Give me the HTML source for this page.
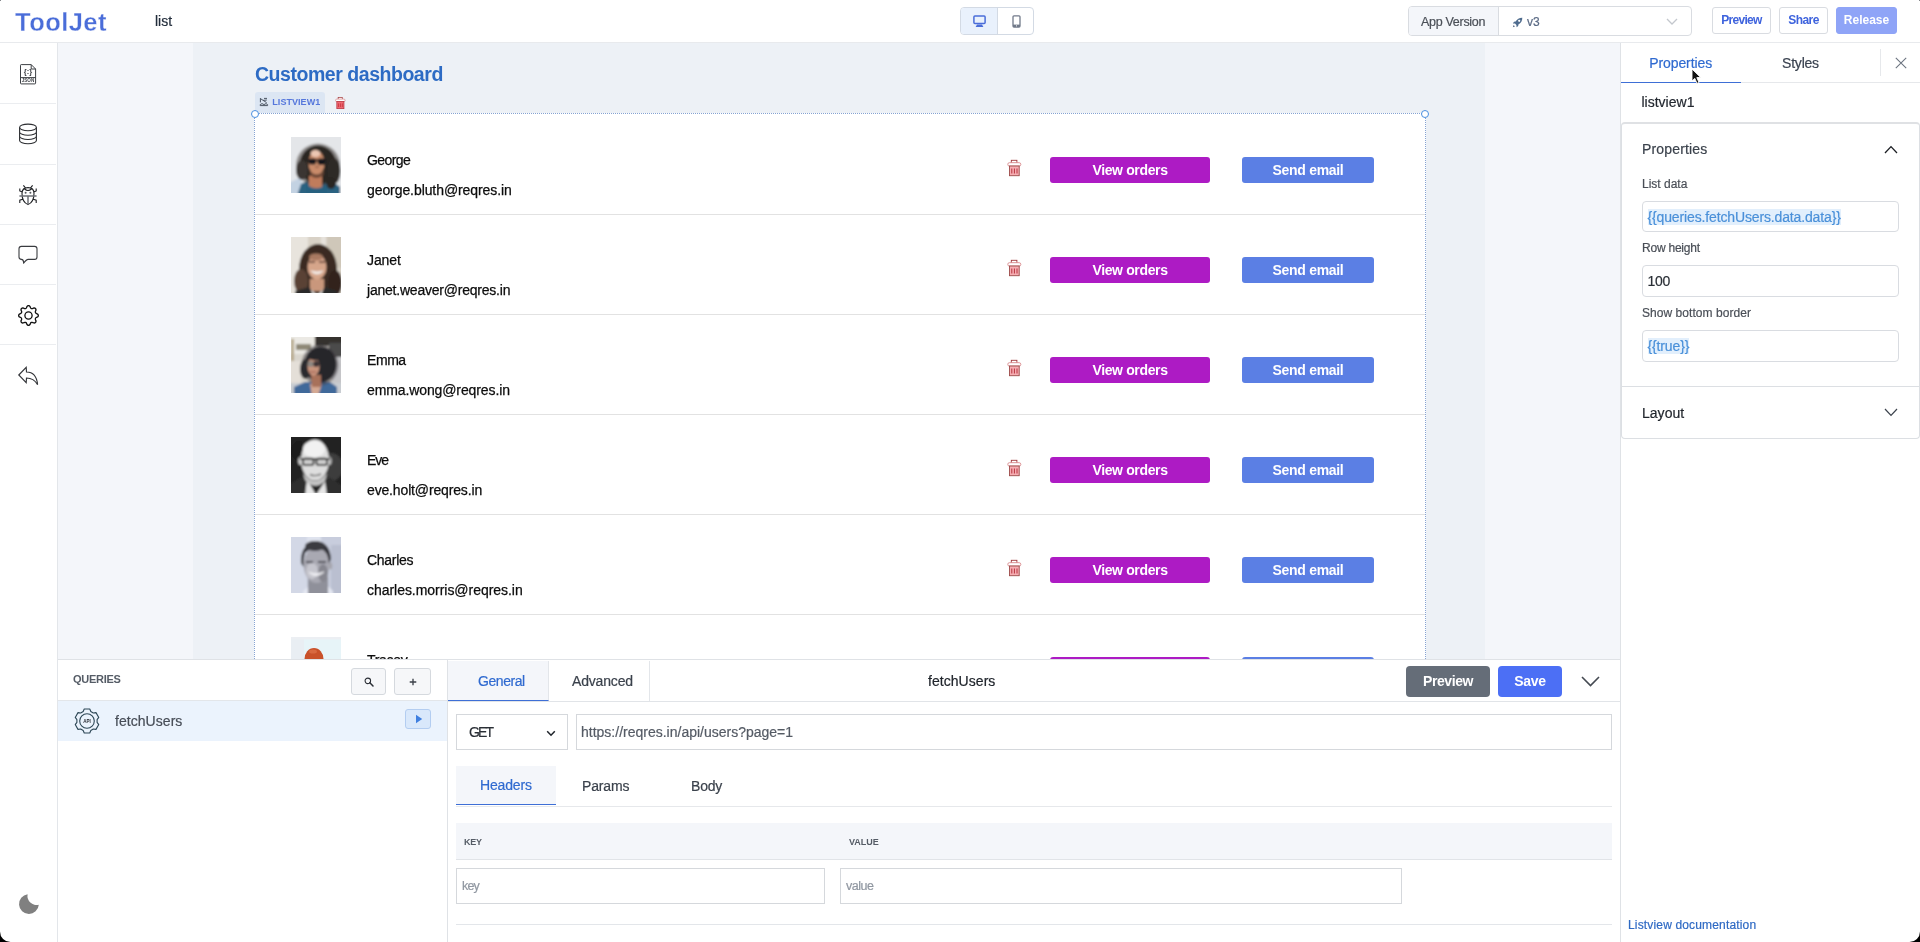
<!DOCTYPE html>
<html lang="en">
<head>
<meta charset="utf-8">
<title>ToolJet - list</title>
<style>
*{box-sizing:border-box;margin:0;padding:0}
html,body{width:1920px;height:942px;overflow:hidden;background:#fff}
body{will-change:transform;font-family:"Liberation Sans",sans-serif;font-size:14px;color:#232e3c;position:relative}
.abs{position:absolute}
.t{position:absolute;white-space:nowrap;line-height:1}
.t,.code{-webkit-text-stroke:.2px}
.b{font-weight:bold;-webkit-text-stroke:0}
/* header */
#hdr{position:absolute;left:0;top:0;width:1920px;height:43px;background:#fff;border-bottom:1px solid #e8eaed}
#logo{left:15px;top:10px;font-size:25.5px;font-weight:bold;color:#4a6dd9;letter-spacing:.45px;-webkit-text-stroke:.3px #fff}
.hbtn{position:absolute;top:7px;height:27px;border:1px solid #d9dce1;border-radius:3px;background:#fff;color:#3e63dd;font-weight:bold;font-size:12px;text-align:center;line-height:25px}
/* sidebar */
#side{position:absolute;left:0;top:43px;width:58px;height:899px;background:#fff;border-right:1px solid #e3e6ea}
.sdiv{position:absolute;left:0;width:56px;height:1px;background:#ebedf0}
.sic{position:absolute;left:17px;width:22px;height:22px}
/* canvas */
#outer{position:absolute;left:58px;top:43px;width:1562px;height:616px;background:#f4f6fa;overflow:hidden}
#canvas{position:absolute;left:135px;top:0;width:1292px;height:616px;background:#edf1f6}
#lv{position:absolute;left:61px;top:70px;width:1172px;height:700px;background:#fff;border:1px dotted #86a3d2}
.row{position:absolute;left:0;width:1170px;height:100px;border-bottom:1px solid #e2e2e2}
.av{position:absolute;left:36px;top:22px;width:50px;height:56px;overflow:hidden}
.nm{left:112px;top:38px;font-size:14px;-webkit-text-stroke:.25px #0c0c0c;color:#0c0c0c}
.em{left:112px;top:68px;font-size:14px;-webkit-text-stroke:.25px #0c0c0c;color:#0c0c0c}
.vo{letter-spacing:-.36px;position:absolute;left:795px;top:42px;width:160px;height:26px;border-radius:3px;background:#ad1bc4;color:#fff;font-weight:bold;font-size:14px;text-align:center;line-height:26px}
.se{letter-spacing:-.3px;position:absolute;left:987px;top:42px;width:132px;height:26px;border-radius:3px;background:#5b7fe4;color:#fff;font-weight:bold;font-size:14px;text-align:center;line-height:26px}
.tr{position:absolute;left:752px;top:44px;width:15px;height:18px}
.hd{position:absolute;width:8px;height:8px;border-radius:50%;background:#fff;border:1px solid #4a8fe0}
/* right panel */
#rp{position:absolute;left:1620px;top:43px;width:300px;height:899px;background:#fff;border-left:1px solid #dfe2e6}
.lbl{font-size:12px;color:#4a4f57}
.inp{position:absolute;left:21px;width:257px;height:31px;border:1px solid #d9dce1;border-radius:4px;background:#fff}
.code{position:absolute;left:4.5px;top:7px;font-size:14px;letter-spacing:-.14px;line-height:16px;color:#4a90d9;background:#e2effc;white-space:nowrap}
/* bottom */
#bp{position:absolute;left:58px;top:659px;width:1562px;height:283px;background:#fff;border-top:1px solid #dfe2e6}
.sbtn{position:absolute;top:8px;height:27px;border:1px solid #d5d9de;border-radius:3px;background:#f6f7f9}
.qin{position:absolute;border:1px solid #d5d8dc;background:#fff;height:36px}
</style>
</head>
<body>

<!-- ============ HEADER ============ -->
<div id="hdr">
  <div class="t" id="logo">ToolJet</div>
  <div class="t" style="left:155px;top:14px;font-size:14px;color:#232e3c">list</div>

  <!-- device toggle -->
  <div class="abs" style="left:960px;top:7px;width:74px;height:28px;border:1px solid #d3dae4;border-radius:4px;background:#fff;overflow:hidden">
    <div class="abs" style="left:0;top:0;width:37px;height:26px;background:#e9f1fc;border-right:1px solid #d3dae4"></div>
    <svg class="abs" style="left:12px;top:6.5px" width="13" height="13" viewBox="0 0 13 13"><rect x=".9" y="1" width="11.2" height="7.6" rx="1" fill="none" stroke="#4a6dd9" stroke-width="1.5"/><path d="M2.6 12 L10.4 12 L9 9.6 L4 9.6 Z" fill="#4a6dd9"/></svg>
    <svg class="abs" style="left:51px;top:7px" width="9" height="13" viewBox="0 0 9 13"><rect x="1" y=".8" width="7" height="11.2" rx="1" fill="#fff" stroke="#727a8a" stroke-width="1.3"/><rect x="1" y="9.6" width="7" height="2.4" fill="#727a8a"/><circle cx="4.5" cy="10.8" r=".6" fill="#fff"/></svg>
  </div>

  <!-- app version -->
  <div class="abs" style="left:1408px;top:6px;width:284px;height:30px;border:1px solid #d9dce1;border-radius:4px;background:#fff;overflow:hidden">
    <div class="abs" style="left:0;top:0;width:90px;height:28px;background:#f4f6fa;border-right:1px solid #d9dce1"></div>
    <div class="t" style="left:12px;top:9px;font-size:12.5px;color:#4a4f57;letter-spacing:-0.30px">App Version</div>
    <svg class="abs" style="left:103px;top:10px" width="11" height="11" viewBox="0 0 11 11"><path d="M10.3 .7 C7.5 .6 5 2 3.6 4.6 L2 4.8 L.8 6.4 L3 6.6 L4.4 8 L4.6 10.2 L6.2 9 L6.4 7.4 C9 6 10.4 3.5 10.3 .7 Z" fill="#4f6c8e"/><circle cx="7.2" cy="3.8" r="1.1" fill="#fff"/><path d="M.8 10.2 L1.6 8 L3 9.4 Z" fill="#5a6a85"/></svg>
    <div class="t" style="left:118px;top:9.3px;font-size:12px;color:#5a6a85;letter-spacing:0.00px">v3</div>
    <svg class="abs" style="left:257px;top:11px" width="12" height="7" viewBox="0 0 12 7"><path d="M1 1 L6 6 L11 1" fill="none" stroke="#c3c7cd" stroke-width="1.3"/></svg>
  </div>

  <div class="hbtn" style="left:1712px;width:59px;letter-spacing:-.7px">Preview</div>
  <div class="hbtn" style="left:1779px;width:49px;letter-spacing:-.55px">Share</div>
  <div class="hbtn" style="left:1836px;width:61px;background:#8fa4f7;border-color:#8fa4f7;color:#fff">Release</div>
</div>

<!-- ============ LEFT SIDEBAR ============ -->
<div id="side">
  <div class="sdiv" style="top:60px"></div>
  <div class="sdiv" style="top:121px"></div>
  <div class="sdiv" style="top:181px"></div>
  <div class="sdiv" style="top:241px"></div>
  <div class="sdiv" style="top:301px"></div>
  <!-- json file icon : page (20,64) -> side-rel y-43 -->
<svg class="abs" style="left:19px;top:20px" width="18" height="22" viewBox="0 0 18 22"><path d="M2.2 1.6 H12.2 L16.6 6 V20.2 Q16.6 20.9 15.9 20.9 H2.2 Q1.5 20.9 1.5 20.2 V2.3 Q1.5 1.6 2.2 1.6 Z M12.2 1.6 V6 H16.6 M1.5 14.6 H16.6" fill="none" stroke="#3d4045" stroke-width="1"/><text x="9" y="10.6" font-family="Liberation Sans, sans-serif" font-size="7.5" font-weight="bold" text-anchor="middle" fill="#3a3d42">{:}</text><text x="9" y="19.4" font-family="Liberation Sans, sans-serif" font-size="4.6" font-weight="bold" text-anchor="middle" fill="#44474c">JSON</text></svg>
<!-- database : page (19,124) -->
<svg class="abs" style="left:18px;top:80px" width="20" height="22" viewBox="0 0 20 22"><ellipse cx="10" cy="4.4" rx="8.4" ry="3.3" fill="none" stroke="#2a2c30" stroke-width="1.1"/><path d="M1.6 4.4 V17.4 C1.6 19.3 5.4 20.7 10 20.7 C14.6 20.7 18.4 19.3 18.4 17.4 V4.4 M1.6 8.9 C1.6 10.8 5.4 12.2 10 12.2 C14.6 12.2 18.4 10.8 18.4 8.9 M1.6 13.2 C1.6 15.1 5.4 16.5 10 16.5 C14.6 16.5 18.4 15.1 18.4 13.2" fill="none" stroke="#2a2c30" stroke-width="1.1"/></svg>
<!-- bug : page (19,185) -->
<svg class="abs" style="left:18px;top:141px" width="20" height="22" viewBox="0 0 20 22"><path d="M4 9.5 C4 5.5 6.5 3.6 10 3.6 C13.5 3.6 16 5.5 16 9.5 C16 15 13.5 19.2 10 20.6 C6.5 19.2 4 15 4 9.5 Z M6.6 5 Q10 8 13.4 5 M7.4 3.9 L5.4 1.4 M12.6 3.9 L14.6 1.4 M4.2 8 L1.8 7 V4.4 M15.8 8 L18.2 7 V4.4 M4.6 15.2 L1.8 16.2 V19 M15.4 15.2 L18.2 16.2 V19" fill="none" stroke="#1f2124" stroke-width="1.1"/><path d="M1.4 12 H18.6 M10 12 V20.4" fill="none" stroke="#6d7075" stroke-width="1.5"/><circle cx="7.6" cy="8.8" r="1" fill="#55585d"/><circle cx="12.4" cy="8.8" r="1" fill="#55585d"/></svg>
<!-- chat : page (18.6,245.8) -->
<svg class="abs" style="left:17px;top:201px" width="22" height="21" viewBox="0 0 22 21"><path d="M4.4 2.4 H17.6 Q20 2.4 20 4.8 V13 Q20 15.4 17.6 15.4 H11.2 Q9.4 15.4 6.6 19.2 Q6.8 15.6 4.4 15.4 Q2 15.2 2 13 V4.8 Q2 2.4 4.4 2.4 Z" fill="none" stroke="#3a3c40" stroke-width="1.1" stroke-linejoin="round"/></svg>
<!-- gear (bootstrap) : centre page (28,315) r10 -->
<svg class="abs" style="left:17.5px;top:261.5px" width="21" height="21" viewBox="0 0 16 16" fill="#111"><path d="M8 4.754a3.246 3.246 0 1 0 0 6.492 3.246 3.246 0 0 0 0-6.492zM5.754 8a2.246 2.246 0 1 1 4.492 0 2.246 2.246 0 0 1-4.492 0z"/><path d="M9.796 1.343c-.527-1.79-3.065-1.79-3.592 0l-.094.319a.873.873 0 0 1-1.255.52l-.292-.16c-1.64-.892-3.433.902-2.54 2.541l.159.292a.873.873 0 0 1-.52 1.255l-.319.094c-1.79.527-1.79 3.065 0 3.592l.319.094a.873.873 0 0 1 .52 1.255l-.16.292c-.892 1.64.901 3.434 2.541 2.54l.292-.159a.873.873 0 0 1 1.255.52l.094.319c.527 1.79 3.065 1.79 3.592 0l.094-.319a.873.873 0 0 1 1.255-.52l.292.16c1.64.893 3.434-.902 2.54-2.541l-.159-.292a.873.873 0 0 1 .52-1.255l.319-.094c1.79-.527 1.79-3.065 0-3.592l-.319-.094a.873.873 0 0 1-.52-1.255l.16-.292c.893-1.64-.902-3.433-2.541-2.54l-.292.159a.873.873 0 0 1-1.255-.52l-.094-.319zm-2.633.283c.246-.835 1.428-.835 1.674 0l.094.319a1.873 1.873 0 0 0 2.693 1.115l.291-.16c.764-.415 1.6.42 1.184 1.185l-.159.292a1.873 1.873 0 0 0 1.116 2.692l.318.094c.835.246.835 1.428 0 1.674l-.319.094a1.873 1.873 0 0 0-1.115 2.693l.16.291c.415.764-.42 1.6-1.185 1.184l-.291-.159a1.873 1.873 0 0 0-2.693 1.116l-.094.318c-.246.835-1.428.835-1.674 0l-.094-.319a1.873 1.873 0 0 0-2.692-1.115l-.292.16c-.764.415-1.6-.42-1.184-1.185l.159-.291A1.873 1.873 0 0 0 1.945 8.93l-.319-.094c-.835-.246-.835-1.428 0-1.674l.319-.094A1.873 1.873 0 0 0 3.06 4.377l-.16-.292c-.415-.764.42-1.6 1.185-1.184l.292.159a1.873 1.873 0 0 0 2.692-1.115l.094-.319z"/></svg>
<!-- reply : page (18.2,366.8)-(37.9,385.3) -->
<svg class="abs" style="left:17px;top:322px" width="23" height="22" viewBox="0 0 23 22"><path d="M1.8 10 L9.2 2.4 L9.5 7 C14.5 7 19.6 9.4 20.6 19.6 C17.6 14.6 14.2 13 9.5 13 L9.2 17.6 Z" fill="none" stroke="#333539" stroke-width="1.15" stroke-linejoin="miter"/></svg>
<!-- moon : page (19,894)-(38.8,914) -->
<svg class="abs" style="left:18px;top:850px" width="22" height="22" viewBox="0 0 22 22"><path d="M9.6 1.2 A9.9 9.9 0 1 0 20.8 11.8 A9.2 9.2 0 0 1 9.6 1.2 Z" fill="#808080"/></svg>

</div>

<!-- ============ CANVAS ============ -->
<div id="outer">
 <div id="canvas">
  <div class="t b" style="left:62px;top:21.5px;font-size:19.5px;color:#2d6bc4;letter-spacing:-.46px" id="title">Customer dashboard</div>
  <!-- widget label -->
  <div class="abs" style="left:62px;top:49px;width:70px;height:22px;background:#dce6f3;border-radius:3px 3px 0 0"></div>
  <svg class="abs" style="left:66px;top:54px" width="10" height="10" viewBox="0 0 10 10"><path d="M1.4 1.2 V5.4 M1.4 1.6 L7.6 5.6 M4 3.4 L7.8 3 M5 1.4 H8 M1.2 7.6 L3 6.6 L5 7.6 L7 6.6 L8.6 7.6 V8.6 H1.2 Z" fill="none" stroke="#4b5563" stroke-width="1"/></svg>

  <div class="t b" style="left:79.3px;top:55px;font-size:9px;color:#5577dc;letter-spacing:.05px" id="lvlabel">LISTVIEW1</div>
  <svg class="abs" style="left:142px;top:53px" width="11" height="14" viewBox="0 0 15 18"><rect x="4.3" y="1.3" width="5.6" height="3" fill="#fff" stroke="#a23a3c" stroke-width="1"/><rect x=".8" y="3.7" width="13" height="3.4" rx="1.6" fill="#fff" stroke="#d98a8c" stroke-width="1"/><rect x="2.5" y="7" width="9.7" height="9.7" fill="#ee6a72" stroke="#b8323e" stroke-width="1"/><path d="M4.8 9.5 V14.5 M7.4 9.5 V14.5 M10 9.5 V14.5" stroke="#c9303c" stroke-width="1.1"/></svg>

  <div id="lv">
   <div class="row" style="top:1px">
 <div class="av"><svg width="50" height="56" viewBox="0 0 50 56"><defs><filter id="bl0" x="-10%" y="-10%" width="120%" height="120%"><feGaussianBlur stdDeviation="0.8"/></filter><clipPath id="cp0"><rect width="50" height="56"/></clipPath></defs><g clip-path="url(#cp0)"><g filter="url(#bl0)"><rect x="-3" y="-3" width="56" height="62" fill="#e4e6e9"/>
<path d="M-3 59 V46 L9 41 L16 59 Z" fill="#c3d2e2"/>
<path d="M6 59 L10 47 L18 43 H40 L49 50 V59 Z" fill="#2b6281"/>
<ellipse cx="27" cy="28" rx="22" ry="21.5" fill="#4a4440" opacity=".55"/>
<ellipse cx="27" cy="28" rx="18.5" ry="19.5" fill="#2b2724"/>
<ellipse cx="11" cy="33" rx="6" ry="10" fill="#3a3531"/>
<ellipse cx="43" cy="34" rx="6.5" ry="13" fill="#2f2a27"/>
<ellipse cx="40" cy="46" rx="5" ry="6" fill="#2a2522"/>
<path d="M18 39 H31 V50 Q24 53 18 49 Z" fill="#c07c5b"/>
<ellipse cx="25.5" cy="26" rx="8" ry="12" fill="#c98b6b"/>
<ellipse cx="24.5" cy="16.5" rx="4.8" ry="3.4" fill="#ecc7b3"/>
<rect x="17.6" y="21.6" width="7.6" height="6" rx="2.4" fill="#18191b"/>
<rect x="26.6" y="21.6" width="7.6" height="6.4" rx="2.4" fill="#18191b"/>
<path d="M17 23 H35" stroke="#18191b" stroke-width="1.6"/>
<path d="M18.5 33 Q25.5 42 33 33 L32 38.5 Q25.5 43.5 19.5 38.5 Z" fill="#6e4838"/>
<path d="M24 30 H28" stroke="#8a5843" stroke-width="1.2"/>
<path d="M15 47 L21 52.5 H31 L36 47 V59 H15 Z" fill="#27607f"/></g></g></svg></div>
 <div class="t nm" style="letter-spacing:-0.6px">George</div>
 <div class="t em" style="letter-spacing:-0.08px">george.bluth@reqres.in</div>
 <div class="tr"><svg width="15" height="18" viewBox="0 0 15 18"><rect x="4.3" y="1.3" width="5.6" height="3" fill="#fff" stroke="#a23a3c" stroke-width=".9"/><rect x=".8" y="3.7" width="13" height="3.4" rx="1.6" fill="#fff" stroke="#d98a8c" stroke-width=".9"/><rect x="2.5" y="7" width="9.7" height="9.7" fill="#f6adb2" stroke="#9c4a48" stroke-width=".9"/><path d="M4.8 9.5 V14.5 M7.4 9.5 V14.5 M10 9.5 V14.5" stroke="#b8323e" stroke-width="1"/></svg>
</div>
 <div class="vo">View orders</div>
 <div class="se">Send email</div>
</div>
<div class="row" style="top:101px">
 <div class="av"><svg width="50" height="56" viewBox="0 0 50 56"><defs><filter id="bl1" x="-10%" y="-10%" width="120%" height="120%"><feGaussianBlur stdDeviation="0.9"/></filter><clipPath id="cp1"><rect width="50" height="56"/></clipPath></defs><g clip-path="url(#cp1)"><g filter="url(#bl1)"><rect x="-3" y="-3" width="56" height="62" fill="#d8d1c6"/>
<rect x="-3" y="-3" width="20" height="62" fill="#e8e4dd"/>
<rect x="30" y="-3" width="5" height="30" fill="#e6e2db"/>
<rect x="36" y="-3" width="17" height="34" fill="#cfc7b9"/>
<ellipse cx="27" cy="32" rx="19" ry="25" fill="#3b2b24"/>
<ellipse cx="10" cy="44" rx="7" ry="12" fill="#5a4336"/>
<ellipse cx="44" cy="46" rx="7" ry="13" fill="#30241f"/>
<path d="M19 42 H33 V54 H19 Z" fill="#c9977c"/>
<ellipse cx="26" cy="30" rx="9.5" ry="12.5" fill="#d6a58a"/>
<ellipse cx="25" cy="20" rx="7" ry="3.5" fill="#a97a62"/>
<path d="M18 25 H24 M28 25 H34" stroke="#5b3b30" stroke-width="1.6"/>
<path d="M20 34 Q26 40 32 34 Q26 36 20 34 Z" fill="#f3ebe6" stroke="#f3ebe6" stroke-width="1"/>
<path d="M4 59 V54 L18 50 L25 59 Z M46 59 V54 L34 50 L27 59 Z" fill="#2b2a2b"/>
<path d="M20 52 L26 59 L32 52 L30 59 H22 Z" fill="#e9e7e4"/></g></g></svg></div>
 <div class="t nm" style="letter-spacing:-0.12px">Janet</div>
 <div class="t em" style="letter-spacing:-0.22px">janet.weaver@reqres.in</div>
 <div class="tr"><svg width="15" height="18" viewBox="0 0 15 18"><rect x="4.3" y="1.3" width="5.6" height="3" fill="#fff" stroke="#a23a3c" stroke-width=".9"/><rect x=".8" y="3.7" width="13" height="3.4" rx="1.6" fill="#fff" stroke="#d98a8c" stroke-width=".9"/><rect x="2.5" y="7" width="9.7" height="9.7" fill="#f6adb2" stroke="#9c4a48" stroke-width=".9"/><path d="M4.8 9.5 V14.5 M7.4 9.5 V14.5 M10 9.5 V14.5" stroke="#b8323e" stroke-width="1"/></svg>
</div>
 <div class="vo">View orders</div>
 <div class="se">Send email</div>
</div>
<div class="row" style="top:201px">
 <div class="av"><svg width="50" height="56" viewBox="0 0 50 56"><defs><filter id="bl2" x="-10%" y="-10%" width="120%" height="120%"><feGaussianBlur stdDeviation="0.8"/></filter><clipPath id="cp2"><rect width="50" height="56"/></clipPath></defs><g clip-path="url(#cp2)"><g filter="url(#bl2)"><rect x="-3" y="-3" width="56" height="62" fill="#d9d5cd"/>
<rect x="-3" y="-3" width="26" height="20" fill="#ebe9e4"/>
<rect x="0" y="2" width="3" height="24" fill="#b7a98a"/>
<rect x="5" y="7" width="15" height="6" fill="#8f8977"/>
<rect x="24" y="-3" width="29" height="12" fill="#34332f"/>
<rect x="38" y="6" width="15" height="16" fill="#4b4b4b"/>
<rect x="41" y="20" width="12" height="27" fill="#c5c5c8"/>
<rect x="-3" y="24" width="13" height="22" fill="#e4dfd8"/>
<path d="M-3 59 V46 H53 V59 Z" fill="#c9cdd2"/>
<path d="M3 59 V50 L14 45 H39 L46 50 V59 Z" fill="#40699a"/>
<path d="M19 47 H31 L27 59 H21 Z" fill="#d5a993"/>
<ellipse cx="29" cy="28" rx="18.5" ry="20.5" fill="#454247" opacity=".5"/>
<ellipse cx="29.5" cy="27.5" rx="16" ry="18" fill="#28262a"/>
<ellipse cx="14.5" cy="32" rx="5.5" ry="10" fill="#2c2a2d"/>
<path d="M20 38 H30 V50 H21 Z" fill="#a8715a"/>
<ellipse cx="22.5" cy="29.5" rx="6" ry="9.2" fill="#c9947d"/>
<circle cx="19.6" cy="27" r="3" fill="#8d8781"/>
<circle cx="25.2" cy="27" r="3" fill="#3a3035"/>
<ellipse cx="25" cy="18.5" rx="9" ry="5" fill="#28262a"/>
<path d="M19 34.5 Q22 36 25 34.5" stroke="#9c5a4c" stroke-width="1.2" fill="none"/></g></g></svg></div>
 <div class="t nm" style="letter-spacing:-0.43px">Emma</div>
 <div class="t em" style="letter-spacing:-0.11px">emma.wong@reqres.in</div>
 <div class="tr"><svg width="15" height="18" viewBox="0 0 15 18"><rect x="4.3" y="1.3" width="5.6" height="3" fill="#fff" stroke="#a23a3c" stroke-width=".9"/><rect x=".8" y="3.7" width="13" height="3.4" rx="1.6" fill="#fff" stroke="#d98a8c" stroke-width=".9"/><rect x="2.5" y="7" width="9.7" height="9.7" fill="#f6adb2" stroke="#9c4a48" stroke-width=".9"/><path d="M4.8 9.5 V14.5 M7.4 9.5 V14.5 M10 9.5 V14.5" stroke="#b8323e" stroke-width="1"/></svg>
</div>
 <div class="vo">View orders</div>
 <div class="se">Send email</div>
</div>
<div class="row" style="top:301px">
 <div class="av"><svg width="50" height="56" viewBox="0 0 50 56"><defs><filter id="bl3" x="-10%" y="-10%" width="120%" height="120%"><feGaussianBlur stdDeviation="0.9"/></filter><clipPath id="cp3"><rect width="50" height="56"/></clipPath></defs><g clip-path="url(#cp3)"><g filter="url(#bl3)"><rect x="-3" y="-3" width="56" height="62" fill="#232323"/>
<ellipse cx="40" cy="30" rx="12" ry="14" fill="#3c3c3c"/>
<ellipse cx="8" cy="14" rx="8" ry="10" fill="#1a1a1a"/>
<path d="M-3 59 V48 L14 38 L25 56 L38 40 L53 50 V59 Z" fill="#2e2e2e"/>
<path d="M16 42 L25 58 L34 44 L36 59 H14 Z" fill="#e6e6e6"/>
<ellipse cx="9.5" cy="24" rx="2.4" ry="4" fill="#c9c9c9"/>
<ellipse cx="38.5" cy="24" rx="2.2" ry="4" fill="#b5b5b5"/>
<ellipse cx="24" cy="23" rx="14" ry="20.5" fill="#dedede"/>
<ellipse cx="23" cy="12" rx="11" ry="8.5" fill="#f1f1f1"/>
<path d="M12 36 Q24 52 36 36 L34 44 Q24 54 14 43 Z" fill="#c4c4c4"/>
<rect x="12" y="21.5" width="10.5" height="6.4" rx="1.5" fill="#d0d0d0" stroke="#1b1b1b" stroke-width="1.7"/>
<rect x="25.5" y="21.5" width="10.5" height="6.4" rx="1.5" fill="#d0d0d0" stroke="#1b1b1b" stroke-width="1.7"/>
<path d="M9 22 H39" stroke="#1b1b1b" stroke-width="1.6"/>
<path d="M19 37.5 Q24 40 30 37" stroke="#6a6a6a" stroke-width="1.4" fill="none"/></g></g></svg></div>
 <div class="t nm" style="letter-spacing:-1.0px">Eve</div>
 <div class="t em" style="letter-spacing:-0.15px">eve.holt@reqres.in</div>
 <div class="tr"><svg width="15" height="18" viewBox="0 0 15 18"><rect x="4.3" y="1.3" width="5.6" height="3" fill="#fff" stroke="#a23a3c" stroke-width=".9"/><rect x=".8" y="3.7" width="13" height="3.4" rx="1.6" fill="#fff" stroke="#d98a8c" stroke-width=".9"/><rect x="2.5" y="7" width="9.7" height="9.7" fill="#f6adb2" stroke="#9c4a48" stroke-width=".9"/><path d="M4.8 9.5 V14.5 M7.4 9.5 V14.5 M10 9.5 V14.5" stroke="#b8323e" stroke-width="1"/></svg>
</div>
 <div class="vo">View orders</div>
 <div class="se">Send email</div>
</div>
<div class="row" style="top:401px">
 <div class="av"><svg width="50" height="56" viewBox="0 0 50 56"><defs><filter id="bl4" x="-10%" y="-10%" width="120%" height="120%"><feGaussianBlur stdDeviation="0.9"/></filter><clipPath id="cp4"><rect width="50" height="56"/></clipPath></defs><g clip-path="url(#cp4)"><g filter="url(#bl4)"><rect x="-3" y="-3" width="56" height="62" fill="#c8cddd"/>
<rect x="-3" y="-3" width="19" height="62" fill="#d3d8e6"/>
<rect x="16" y="-3" width="14" height="12" fill="#dfe3ee"/>
<rect x="40" y="8" width="13" height="51" fill="#babfd0"/>
<path d="M12 59 V54 L17 50 H38 L42 54 V59 Z" fill="#e3e6f0"/>
<path d="M17 40 H37 V59 H17 Z" fill="#8f909a"/>
<ellipse cx="25.5" cy="28" rx="12.8" ry="18" fill="#a9a9b2"/>
<ellipse cx="21" cy="34" rx="6" ry="8" fill="#c6c6ce"/>
<ellipse cx="32" cy="36" rx="5" ry="9" fill="#86868f"/>
<path d="M10 26 Q9 8 24 4.5 Q39 4 40 22 L38 27 Q37 14 30 12 Q20 10 14 16 Q12 22 12.5 30 Z" fill="#35353b"/>
<ellipse cx="24" cy="9" rx="10" ry="5" fill="#3a3a41"/>
<ellipse cx="39.5" cy="29" rx="1.8" ry="3.4" fill="#a6a6ae"/>
<path d="M15 25 H22 M27 25 H35" stroke="#4a4a52" stroke-width="1.8"/>
<path d="M18 35.5 Q25 42 33 35 Q25 38 18 35.5 Z" fill="#f0f0f4" stroke="#f0f0f4" stroke-width=".8"/></g></g></svg></div>
 <div class="t nm" style="letter-spacing:-0.3px">Charles</div>
 <div class="t em" style="letter-spacing:-0.04px">charles.morris@reqres.in</div>
 <div class="tr"><svg width="15" height="18" viewBox="0 0 15 18"><rect x="4.3" y="1.3" width="5.6" height="3" fill="#fff" stroke="#a23a3c" stroke-width=".9"/><rect x=".8" y="3.7" width="13" height="3.4" rx="1.6" fill="#fff" stroke="#d98a8c" stroke-width=".9"/><rect x="2.5" y="7" width="9.7" height="9.7" fill="#f6adb2" stroke="#9c4a48" stroke-width=".9"/><path d="M4.8 9.5 V14.5 M7.4 9.5 V14.5 M10 9.5 V14.5" stroke="#b8323e" stroke-width="1"/></svg>
</div>
 <div class="vo">View orders</div>
 <div class="se">Send email</div>
</div>
<div class="row" style="top:501px">
 <div class="av"><svg width="50" height="56" viewBox="0 0 50 56"><defs><filter id="bl5" x="-10%" y="-10%" width="120%" height="120%"><feGaussianBlur stdDeviation="0.7"/></filter><clipPath id="cp5"><rect width="50" height="56"/></clipPath></defs><g clip-path="url(#cp5)"><g filter="url(#bl5)"><rect x="-3" y="-3" width="56" height="62" fill="#e7f4f8"/>
<rect x="-3" y="-3" width="16" height="62" fill="#e9eef3"/><rect x="-3" y="-3" width="56" height="5.5" fill="#eceff3"/>
<ellipse cx="23" cy="22" rx="9.5" ry="11" fill="#c9512b"/>
<ellipse cx="22" cy="14.5" rx="4" ry="2" fill="#d8683f"/></g></g></svg></div>
 <div class="t nm" style="letter-spacing:-0.3px">Tracey</div>
 <div class="t em" style="letter-spacing:-0.1px">tracey.ramos@reqres.in</div>
 <div class="tr"><svg width="15" height="18" viewBox="0 0 15 18"><rect x="4.3" y="1.3" width="5.6" height="3" fill="#fff" stroke="#a23a3c" stroke-width=".9"/><rect x=".8" y="3.7" width="13" height="3.4" rx="1.6" fill="#fff" stroke="#d98a8c" stroke-width=".9"/><rect x="2.5" y="7" width="9.7" height="9.7" fill="#f6adb2" stroke="#9c4a48" stroke-width=".9"/><path d="M4.8 9.5 V14.5 M7.4 9.5 V14.5 M10 9.5 V14.5" stroke="#b8323e" stroke-width="1"/></svg>
</div>
 <div class="vo">View orders</div>
 <div class="se">Send email</div>
</div>

  </div>
  <div class="hd" style="left:57.5px;top:67px"></div>
  <div class="hd" style="left:1228px;top:67px"></div>
 </div>
</div>

<!-- ============ RIGHT PANEL ============ -->
<div id="rp">
  <!-- tabs -->
<div class="abs" style="left:0;top:39px;width:299px;height:1px;background:#e6e8eb"></div>
<div class="abs" style="left:0;top:38.5px;width:120px;height:1.5px;background:#3e6fd6"></div>
<div class="t" style="left:28.2px;top:12.5px;font-size:14px;color:#2f6ad0;letter-spacing:-0.09px">Properties</div>
<div class="t" style="left:161px;top:12.5px;font-size:14px;color:#3a4250;letter-spacing:-0.20px">Styles</div>
<div class="abs" style="left:259px;top:6px;width:1px;height:27px;background:#e6e8eb"></div>
<svg class="abs" style="left:274px;top:13.5px" width="12" height="12" viewBox="0 0 12 12"><path d="M.8 .8 L11.2 11.2 M11.2 .8 L.8 11.2" stroke="#6c7480" stroke-width="1.1" fill="none"/></svg>
<!-- cursor -->
<svg class="abs" style="left:70px;top:25px" width="11" height="17" viewBox="0 0 11 17"><path d="M1 1 L1 13 L3.8 10.4 L6 15.4 L8 14.5 L5.8 9.6 L9.6 9.4 Z" fill="#111" stroke="#fff" stroke-width=".9" stroke-linejoin="round"/></svg>
<!-- name -->
<div class="t" style="left:20.4px;top:51.5px;font-size:14px;color:#232830;letter-spacing:0.02px">listview1</div>
<!-- accordion card -->
<div class="abs" style="left:0;top:79px;width:299px;height:317px;border:1px solid #dcdfe3;border-top:2px solid #dfe1e4;border-radius:4px;background:#fff"></div>
<div class="t" style="left:21px;top:98.5px;font-size:14px;color:#3b424c;letter-spacing:0.16px">Properties</div>
<svg class="abs" style="left:263px;top:102px" width="14" height="9" viewBox="0 0 14 9"><path d="M1 8 L7 1.6 L13 8" fill="none" stroke="#1c1f24" stroke-width="1.3"/></svg>
<div class="t lbl" style="left:21px;top:135px">List data</div>
<div class="inp" style="top:158px"><span class="code">{{queries.fetchUsers.data.data}}</span></div>
<div class="t lbl" style="left:21px;top:198.5px;letter-spacing:-0.22px">Row height</div>
<div class="inp" style="top:222px;height:32px"><span class="t" style="left:4.6px;top:8px;font-size:14px;color:#2a2f36;letter-spacing:-0.30px">100</span></div>
<div class="t lbl" style="left:21px;top:264px;letter-spacing:0.05px">Show bottom border</div>
<div class="inp" style="top:287px;height:32px"><span class="code">{{true}}</span></div>
<div class="abs" style="left:1px;top:343px;width:297px;height:1px;background:#dcdfe3"></div>
<div class="t" style="left:21px;top:362.5px;font-size:14px;color:#1f242b;letter-spacing:0.02px">Layout</div>
<svg class="abs" style="left:263px;top:365px" width="14" height="9" viewBox="0 0 14 9"><path d="M1 1 L7 7.4 L13 1" fill="none" stroke="#3b424c" stroke-width="1.2"/></svg>
<!-- doc link -->
<div class="t" style="left:7px;top:876px;font-size:12px;color:#2f6ac4;letter-spacing:0.16px">Listview documentation</div>

</div>

<!-- ============ BOTTOM QUERY PANEL ============ -->
<div id="bp">
  <!-- left: queries list (coords relative to page x-58, y-660) -->
<div class="t b" style="left:15px;top:14px;font-size:11px;color:#555c66;letter-spacing:-0.27px">QUERIES</div>
<div class="sbtn" style="left:293px;width:35px"><svg class="abs" style="left:11.5px;top:8px" width="10" height="10" viewBox="0 0 12 12"><circle cx="4.6" cy="4.6" r="3.3" fill="none" stroke="#2b2f36" stroke-width="1.3"/><path d="M7 7 L10.8 10.8" stroke="#2b2f36" stroke-width="1.8" stroke-linecap="round"/></svg></div>
<div class="sbtn" style="left:336px;width:37px"><svg class="abs" style="left:13.5px;top:8.5px" width="8" height="8" viewBox="0 0 9 9"><path d="M4.5 .8 V8.2 M.8 4.5 H8.2" stroke="#3b4048" stroke-width="1.5"/></svg></div>
<div class="abs" style="left:0;top:40px;width:389px;height:1px;background:#e3e6ea"></div>
<div class="abs" style="left:0;top:41px;width:389px;height:40px;background:#ebf3fd"></div>
<svg class="abs" style="left:14.5px;top:47px" width="28" height="28" viewBox="0 0 28 28"><path d="M10.18 4.54 L11.23 2.02 L16.77 2.02 L17.82 4.54 L20.28 5.96 L23.00 5.61 L25.76 10.40 L24.10 12.58 L24.10 15.42 L25.76 17.60 L23.00 22.39 L20.28 22.04 L17.82 23.46 L16.77 25.98 L11.23 25.98 L10.18 23.46 L7.72 22.04 L5.00 22.39 L2.24 17.60 L3.90 15.42 L3.90 12.58 L2.24 10.40 L5.00 5.61 L7.72 5.96 Z" fill="none" stroke="#2d4756" stroke-width="1.1" stroke-linejoin="round"/><circle cx="14" cy="14" r="7.3" fill="none" stroke="#2d4756" stroke-width="1.1"/><text x="14" y="15.7" font-family="Liberation Sans, sans-serif" font-size="4.6" font-weight="bold" text-anchor="middle" fill="#2b2f36">API</text></svg>
<div class="t" style="left:57px;top:53.5px;font-size:14px;color:#474d57;letter-spacing:0.05px">fetchUsers</div>
<div class="abs" style="left:347px;top:49px;width:26px;height:20px;border:1px solid #b3cdf1;border-radius:3px;background:#d9e8fb"><svg class="abs" style="left:9px;top:4px" width="8" height="10" viewBox="0 0 8 10"><path d="M1 .8 L7.2 5 L1 9.2 Z" fill="#3f7fe0"/></svg></div>
<div class="abs" style="left:389px;top:0;width:1px;height:283px;background:#dfe2e6"></div>

<!-- right: editor -->
<div class="abs" style="left:390px;top:0;width:1172px;height:42px;border-bottom:1px solid #e1e4e8"></div>
<div class="abs" style="left:390px;top:1px;width:101px;height:40.4px;background:#f4f6fa;border-right:1px solid #e3e6ea;border-bottom:1.4px solid #3e6fd6"></div>
<div class="t" style="left:420px;top:13.8px;font-size:14px;color:#2f6ad0;letter-spacing:-0.44px">General</div>
<div class="abs" style="left:591px;top:1px;width:1px;height:40px;background:#e3e6ea"></div>
<div class="t" style="left:514px;top:13.8px;font-size:14px;color:#3b424c;letter-spacing:-0.17px">Advanced</div>
<div class="t" style="left:870px;top:13.8px;font-size:14px;color:#20252c;letter-spacing:0.05px">fetchUsers</div>
<div class="abs b" style="left:1348px;top:6px;width:84px;height:31px;border-radius:4px;background:#656d78;color:#fff;font-size:14px;letter-spacing:-.43px;text-align:center;line-height:30px">Preview</div>
<div class="abs b" style="left:1440px;top:6px;width:64px;height:31px;border-radius:4px;background:#4c6ff5;color:#fff;font-size:14px;letter-spacing:-.33px;text-align:center;line-height:30px">Save</div>
<svg class="abs" style="left:1523px;top:15.5px" width="19" height="11" viewBox="0 0 19 11"><path d="M1 1 L9.5 9.5 L18 1" fill="none" stroke="#454a52" stroke-width="1.6"/></svg>

<!-- method + url -->
<div class="qin" style="left:398px;top:54px;width:112px"><span class="t" style="left:12px;top:10.3px;font-size:14px;color:#2a2f36;letter-spacing:-1.90px">GET</span><svg class="abs" style="left:89px;top:15px" width="10" height="7" viewBox="0 0 10 7"><path d="M1.2 1.2 L5 5.2 L8.8 1.2" fill="none" stroke="#1f242b" stroke-width="1.5"/></svg></div>
<div class="qin" style="left:518px;top:54px;width:1036px"><span class="t" style="left:4px;top:10px;font-size:14px;color:#555b65">https://reqres.in/api/users?page=1</span></div>

<!-- sub tabs -->
<div class="abs" style="left:398px;top:106px;width:100px;height:39.4px;background:#f4f6fa;border-bottom:1.4px solid #3e6fd6"></div>
<div class="t" style="left:422px;top:117.6px;font-size:14px;color:#2f6ad0;letter-spacing:-0.16px">Headers</div>
<div class="t" style="left:524px;top:118.6px;font-size:14px;color:#3b424c;letter-spacing:-0.16px">Params</div>
<div class="t" style="left:633px;top:118.6px;font-size:14px;color:#3b424c;letter-spacing:-0.20px">Body</div>
<div class="abs" style="left:398px;top:146px;width:1156px;height:1px;background:#e6e8eb"></div>

<!-- key/value table -->
<div class="abs" style="left:398px;top:163px;width:1156px;height:37px;background:#f4f6fa;border-bottom:1px solid #e1e4e8"></div>
<div class="t b" style="left:406px;top:178.4px;font-size:9px;color:#555c66;letter-spacing:-0.30px">KEY</div>
<div class="t b" style="left:791px;top:178.4px;font-size:9px;color:#555c66;letter-spacing:-0.05px">VALUE</div>
<div class="qin" style="left:398px;top:208px;width:369px"><span class="t" style="left:5px;top:11px;font-size:12.5px;color:#9097a1;letter-spacing:-0.80px">key</span></div>
<div class="qin" style="left:782px;top:208px;width:562px"><span class="t" style="left:5px;top:11px;font-size:12.5px;color:#9097a1;letter-spacing:-0.50px">value</span></div>
<div class="abs" style="left:398px;top:264px;width:1156px;height:1px;background:#e3e6ea"></div>

</div>

<!-- window corners -->
<div class="abs" style="left:0;top:0;width:1px;height:1px;background:#85888c"></div>
<div class="abs" style="left:1919px;top:0;width:1px;height:1px;background:#85888c"></div>
<svg class="abs" style="left:0;top:931px" width="11" height="11" viewBox="0 0 11 11"><path d="M0 11 H10.5 A10.5 10.5 0 0 1 0 .5 Z" fill="#000"/></svg>
<svg class="abs" style="left:1909px;top:931px" width="11" height="11" viewBox="0 0 11 11"><path d="M11 11 H.5 A10.5 10.5 0 0 0 11 .5 Z" fill="#000"/></svg>
</body>
</html>
